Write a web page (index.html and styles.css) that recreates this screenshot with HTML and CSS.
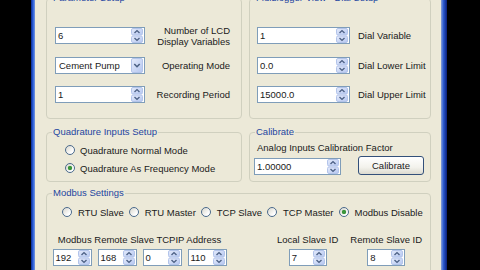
FILE: index.html
```html
<!DOCTYPE html>
<html>
<head>
<meta charset="utf-8">
<link rel="stylesheet" href="styles.css">
</head>
<body>
<svg class="sprite" width="0" height="0" aria-hidden="true">
  <defs>
    <linearGradient id="sg" x1="0" y1="0" x2="1" y2="1">
      <stop offset="0" stop-color="#E6ECFB"/>
      <stop offset="1" stop-color="#B4C6F0"/>
    </linearGradient>
    <symbol id="spin" viewBox="0 0 12 15">
      <rect x="0.5" y="0.5" width="11" height="6.5" rx="1.5" fill="url(#sg)" stroke="#B3C4EA"/>
      <rect x="0.5" y="8" width="11" height="6.5" rx="1.5" fill="url(#sg)" stroke="#B3C4EA"/>
      <path d="M3.5 5 L6 2.6 L8.5 5" fill="none" stroke="#4D6185" stroke-width="1.4"/>
      <path d="M3.5 10 L6 12.4 L8.5 10" fill="none" stroke="#4D6185" stroke-width="1.4"/>
    </symbol>
    <symbol id="drop" viewBox="0 0 12 15">
      <rect x="0.5" y="0.5" width="11" height="14" rx="1.5" fill="url(#sg)" stroke="#B3C4EA"/>
      <path d="M3.3 6 L6 8.7 L8.7 6" fill="none" stroke="#4D6185" stroke-width="1.6"/>
    </symbol>
  </defs>
</svg>
<div class="screen">
  <div class="bar-l"></div>
  <div class="frame-l"></div>
  <div class="dialog">
    <div class="row row1">
      <div class="group g-left">
        <div class="title">Parameter Setup</div>
        <div class="fields">
          <div class="field">
            <div class="edit w90"><span class="val">6</span><svg class="spn"><use href="#spin"/></svg></div>
            <div class="lbl right">Number of LCD<br>Display Variables</div>
          </div>
          <div class="field">
            <div class="edit w90"><span class="val combo">Cement Pump</span><svg class="spn"><use href="#drop"/></svg></div>
            <div class="lbl right">Operating Mode</div>
          </div>
          <div class="field">
            <div class="edit w90"><span class="val">1</span><svg class="spn"><use href="#spin"/></svg></div>
            <div class="lbl right">Recording Period</div>
          </div>
        </div>
      </div>
      <div class="group g-right">
        <div class="title">Fluidlogger View - Dial Setup</div>
        <div class="fields">
          <div class="field">
            <div class="edit w93"><span class="val">1</span><svg class="spn"><use href="#spin"/></svg></div>
            <div class="lbl">Dial Variable</div>
          </div>
          <div class="field">
            <div class="edit w93"><span class="val">0.0</span><svg class="spn"><use href="#spin"/></svg></div>
            <div class="lbl">Dial Lower Limit</div>
          </div>
          <div class="field">
            <div class="edit w93"><span class="val">15000.0</span><svg class="spn"><use href="#spin"/></svg></div>
            <div class="lbl">Dial Upper Limit</div>
          </div>
        </div>
      </div>
    </div>

    <div class="row row2">
      <div class="group g-left quad">
        <div class="title">Quadrature Inputs Setup</div>
        <div class="qopts">
          <div class="opt"><span class="radio"></span><span>Quadrature Normal Mode</span></div>
          <div class="opt"><span class="radio on"></span><span>Quadrature As Frequency Mode</span></div>
        </div>
      </div>
      <div class="group g-right cal">
        <div class="title">Calibrate</div>
        <div class="cal-lbl">Analog Inputs Calibration Factor</div>
        <div class="cal-row">
          <div class="edit w87"><span class="val">1.00000</span><svg class="spn"><use href="#spin"/></svg></div>
          <div class="btn">Calibrate</div>
        </div>
      </div>
    </div>

    <div class="row row3">
      <div class="group modbus">
        <div class="title">Modbus Settings</div>
        <div class="radios">
          <div class="opt"><span class="radio"></span><span>RTU Slave</span></div>
          <div class="opt"><span class="radio"></span><span>RTU Master</span></div>
          <div class="opt"><span class="radio"></span><span>TCP Slave</span></div>
          <div class="opt"><span class="radio"></span><span>TCP Master</span></div>
          <div class="opt"><span class="radio on"></span><span>Modbus Disable</span></div>
        </div>
        <div class="mb-bottom">
          <div class="col addr">
            <div class="col-lbl">Modbus Remote Slave TCPIP Address</div>
            <div class="ips">
              <div class="edit w39"><span class="val">192</span><svg class="spn"><use href="#spin"/></svg></div>
              <div class="edit w39"><span class="val">168</span><svg class="spn"><use href="#spin"/></svg></div>
              <div class="edit w39"><span class="val">0</span><svg class="spn"><use href="#spin"/></svg></div>
              <div class="edit w39"><span class="val">110</span><svg class="spn"><use href="#spin"/></svg></div>
            </div>
          </div>
          <div class="col local">
            <div class="col-lbl">Local Slave ID</div>
            <div class="edit w38"><span class="val">7</span><svg class="spn"><use href="#spin"/></svg></div>
          </div>
          <div class="col remote">
            <div class="col-lbl">Remote Slave ID</div>
            <div class="edit w38"><span class="val">8</span><svg class="spn"><use href="#spin"/></svg></div>
          </div>
        </div>
      </div>
    </div>
  </div>
  <div class="frame-r"></div>
  <div class="bar-r"></div>
</div>
</body>
</html>
```
FILE: styles.css
```css
* { box-sizing: border-box; }
html, body { margin: 0; padding: 0; height: 100%; }
body {
  background: #000;
  overflow: hidden;
  font-family: "Liberation Sans", Arial, sans-serif;
  font-size: 9.5px;
  color: #1a1a1a;
}
.sprite { display: block; width: 0; height: 0; overflow: hidden; }
.screen { display: flex; height: 270px; overflow: hidden; }
.bar-l { width: 31px; flex: none; background: #000; }
.frame-l { width: 4px; flex: none; background: linear-gradient(to right, #0b2a90, #2d63e0 55%, #7b98dc); }
.dialog {
  width: 406px;
  flex: none;
  background: #ECE9D8;
  padding: 0 10px 0 11px;
  display: flex;
  flex-direction: column;
  overflow: hidden;
}
.frame-r { width: 6px; flex: none; background: linear-gradient(to right, #8aa2d8, #2d5bd0 40%, #0a1f7a); }
.bar-r { flex: 1; background: #000; }

.row { display: flex; gap: 7px; flex: none; }
.row1 { margin-top: -2px; height: 121px; }
.row2 { margin-top: 13px; height: 50px; }
.row3 { margin-top: 11px; height: 100px; }

.group {
  border: 1px solid #D0D0BF;
  border-radius: 4px;
}
.g-left { width: 196px; }
.g-right { width: 182px; }
.modbus { width: 385px; }

.title {
  width: fit-content;
  margin: -7px 0 0 5px;
  padding: 0 1px;
  height: 12px;
  line-height: 12px;
  background: #ECE9D8;
  color: #1E46A0;
  white-space: nowrap;
}

.fields {
  display: flex;
  flex-direction: column;
  gap: 12.5px;
  margin-top: 23px;
}
.g-left .fields { padding: 0 11px 0 8px; }
.g-right .fields { padding: 0 4px 0 7px; }
.field { display: flex; align-items: center; height: 17px; }
.lbl { line-height: 11px; white-space: nowrap; margin-left: 8px; }
.lbl.right { flex: 1; text-align: right; margin-left: 0; }

.edit {
  display: flex;
  align-items: center;
  height: 17px;
  border: 1px solid #7F9DB9;
  background: #fff;
  padding-right: 1px;
  flex: none;
}
.edit .val { flex: 1; padding-left: 2px; line-height: 15px; white-space: nowrap; overflow: hidden; }
.edit .val.combo { padding-left: 3px; }
.spn { width: 12px; height: 15px; flex: none; display: block; }
.w90 { width: 90px; }
.w93 { width: 93px; }
.w87 { width: 87px; }
.w39 { width: 39px; }
.w38 { width: 38px; }

.opt { display: flex; align-items: center; white-space: nowrap; }
.radio {
  width: 10px;
  height: 10px;
  flex: none;
  border-radius: 50%;
  border: 1px solid #4A6A8C;
  background: linear-gradient(135deg, #D8D6CC, #FFFFFF 75%);
}
.radio.on {
  background:
    radial-gradient(circle at center, #3C963C 0 1.8px, rgba(60,150,60,0) 2.6px),
    linear-gradient(135deg, #D8D6CC, #FFFFFF 75%);
}

.qopts { margin-top: 3px; padding-left: 18px; }
.qopts .opt { height: 18px; gap: 5px; }

.cal-lbl { margin-top: 4px; padding-left: 7px; line-height: 12px; white-space: nowrap; }
.cal-row { display: flex; align-items: flex-end; margin-top: 2px; padding-left: 4px; height: 19px; }
.btn {
  width: 66px;
  height: 19px;
  margin-left: 17px;
  border: 1px solid #33507A;
  border-radius: 3px;
  background: linear-gradient(#FFFFFF, #F3F2EC 60%, #DCDAD0);
  text-align: center;
  line-height: 17px;
}

.radios {
  display: flex;
  align-items: center;
  height: 14px;
  margin-top: 6px;
  padding-left: 15px;
}
.radios .opt { gap: 6px; margin-right: 5px; }

.mb-bottom { display: flex; margin-top: 15px; padding-left: 5px; }
.col { display: flex; flex-direction: column; align-items: center; }
.col-lbl { line-height: 12px; height: 12px; white-space: nowrap; margin-bottom: 3px; }
.addr { width: 175px; }
.local { margin-left: 50px; }
.remote { margin-left: 12px; }
.ips { display: flex; gap: 6px; }
```
